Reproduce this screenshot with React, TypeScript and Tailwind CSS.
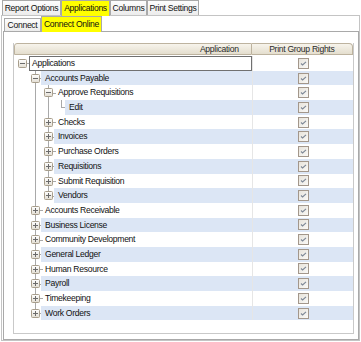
import React from 'react';

type Row = { label: string; level: number; kind: 'minus' | 'plus' | 'leaf'; last?: boolean; cont: number[] };

// cont = ancestor levels whose line keeps running through this row
const rows: Row[] = [
  { label: 'Applications', level: 0, kind: 'minus', cont: [] },
  { label: 'Accounts Payable', level: 1, kind: 'minus', cont: [] },
  { label: 'Approve Requisitions', level: 2, kind: 'minus', cont: [1] },
  { label: 'Edit', level: 3, kind: 'leaf', last: true, cont: [1, 2] },
  { label: 'Checks', level: 2, kind: 'plus', cont: [1] },
  { label: 'Invoices', level: 2, kind: 'plus', cont: [1] },
  { label: 'Purchase Orders', level: 2, kind: 'plus', cont: [1] },
  { label: 'Requisitions', level: 2, kind: 'plus', cont: [1] },
  { label: 'Submit Requisition', level: 2, kind: 'plus', cont: [1] },
  { label: 'Vendors', level: 2, kind: 'plus', last: true, cont: [1] },
  { label: 'Accounts Receivable', level: 1, kind: 'plus', cont: [] },
  { label: 'Business License', level: 1, kind: 'plus', cont: [] },
  { label: 'Community Development', level: 1, kind: 'plus', cont: [] },
  { label: 'General Ledger', level: 1, kind: 'plus', cont: [] },
  { label: 'Human Resource', level: 1, kind: 'plus', cont: [] },
  { label: 'Payroll', level: 1, kind: 'plus', cont: [] },
  { label: 'Timekeeping', level: 1, kind: 'plus', cont: [] },
  { label: 'Work Orders', level: 1, kind: 'plus', last: true, cont: [] },
];

const lx = (l: number) => 8 + 13 * l;

function Expander({ plus }: { plus: boolean }) {
  return (
    <svg width="9" height="9" viewBox="0 0 9 9" className="block">
      <defs>
        <linearGradient id="eg" x1="0" y1="0" x2="0" y2="1">
          <stop offset="0" stopColor="#ffffff" />
          <stop offset="1" stopColor="#e2ddd2" />
        </linearGradient>
      </defs>
      <rect x="0.5" y="0.5" width="8" height="8" rx="1" fill="url(#eg)" stroke="#a89e8c" />
      <line x1="2" y1="4.5" x2="7" y2="4.5" stroke="#6b6b6b" />
      {plus && <line x1="4.5" y1="2" x2="4.5" y2="7" stroke="#6b6b6b" />}
    </svg>
  );
}

function Check() {
  return (
    <svg width="11" height="11" viewBox="0 0 11 11" className="block">
      <defs>
        <linearGradient id="cg" x1="0" y1="0" x2="1" y2="1">
          <stop offset="0" stopColor="#e6e2da" />
          <stop offset="1" stopColor="#fbfaf8" />
        </linearGradient>
      </defs>
      <rect x="0.5" y="0.5" width="10" height="10" fill="url(#cg)" stroke="#a3978b" />
      <path d="M3 5.5 L4.6 7 L8 3.8" fill="none" stroke="#7d8796" strokeWidth="1.1" />
    </svg>
  );
}

function TreeRow({ r, i }: { r: Row; i: number }) {
  const blue = i % 2 === 1;
  const textX = r.level === 3 ? lx(3) + 8 : lx(r.level) + 10;
  return (
    <div className={`flex h-[14.7px] ${blue ? 'bg-[#dce6f5]' : ''}`}>
      <div className="relative w-[239px] bg-white">
        {r.cont.map((a) => (
          <div key={a} className="absolute top-0 bottom-0 w-px bg-[#a9a9a9]" style={{ left: lx(a) }} />
        ))}
        {r.level >= 1 && (
          <div
            className={`absolute top-0 w-px bg-[#a9a9a9] ${r.last ? 'h-1/2' : 'bottom-0'}`}
            style={{ left: lx(r.level) }}
          />
        )}
        <div
          className="absolute top-1/2 h-px bg-[#a9a9a9]"
          style={{ left: lx(r.level), width: textX - lx(r.level) - 2 }}
        />
        {r.kind !== 'leaf' && (
          <div className="absolute top-[3px]" style={{ left: lx(r.level) - 4 }}>
            <Expander plus={r.kind === 'plus'} />
          </div>
        )}
        <div
          className={`absolute top-0 bottom-0 right-0 flex items-center whitespace-nowrap ${blue ? 'bg-[#dce6f5]' : ''} ${
            i === 0 ? 'border border-[#707070]' : ''
          }`}
          style={{ left: textX - (i === 0 ? 3 : 4) }}
        >
          <span className={i === 0 ? 'pl-[2px]' : 'pl-[4px]'}>{r.label}</span>
        </div>
      </div>
      <div className="flex w-[101px] items-center justify-center border-l border-[#e6e6e6]">
        <Check />
      </div>
    </div>
  );
}

function Tab({ label, active, w, small }: { label: string; active?: boolean; w: number; small?: boolean }) {
  return (
    <div
      className={`flex items-center justify-center whitespace-nowrap border-x border-t border-[#a9a9a9] ${
        active
          ? 'relative z-10 -mb-px h-[16px] bg-[#ffff00]'
          : small
          ? 'h-[13px] bg-gradient-to-b from-[#fdfdfd] to-[#ececec]'
          : 'h-[15px] bg-gradient-to-b from-[#fdfdfd] to-[#ececec]'
      }`}
      style={{ width: w }}
    >
      {label}
    </div>
  );
}

export default function App() {
  return (
    <div
      className="relative h-[342px] w-[361px] overflow-hidden bg-white text-[8.6px] leading-none tracking-[-0.3px] text-[#111]"
      style={{ fontFamily: '"Liberation Sans", Arial, sans-serif' }}
    >
      <div className="flex items-end pl-[2px]">
        <Tab label="Report Options" w={59} />
        <Tab label="Applications" w={49} active />
        <Tab label="Columns" w={37} />
        <Tab label="Print Settings" w={52} />
      </div>
      <div className="ml-[1px] h-[326px] w-[359px] border border-[#c4c4c4] bg-white">
        <div className="flex items-end pl-[2px]">
          <Tab label="Connect" w={37} small />
          <Tab label="Connect Online" w={61} active />
        </div>
        <div className="ml-[1px] h-[309px] w-[356px] border border-[#a9a9a9] pt-[11px] pl-[9px]">
          <div className="h-[291px] w-[341px] border border-t-0 border-[#c9c9c9]">
            <div className="flex h-[12px] text-[#2a2a2a]">
              <div className="flex w-[239px] items-center justify-end rounded-tl-[3px] border border-[#bdb39f] bg-gradient-to-b from-[#f7f4ec] to-[#e4dece] pr-[12px]">
                Application
              </div>
              <div className="flex w-[102px] items-center justify-center rounded-tr-[4px] border border-l-0 border-[#bdb39f] bg-gradient-to-b from-[#f7f4ec] to-[#e4dece]">
                Print Group Rights
              </div>
            </div>
            <div className="pt-[1px]">
              {rows.map((r, i) => (
                <TreeRow key={r.label} r={r} i={i} />
              ))}
            </div>
          </div>
        </div>
      </div>
    </div>
  );
}
